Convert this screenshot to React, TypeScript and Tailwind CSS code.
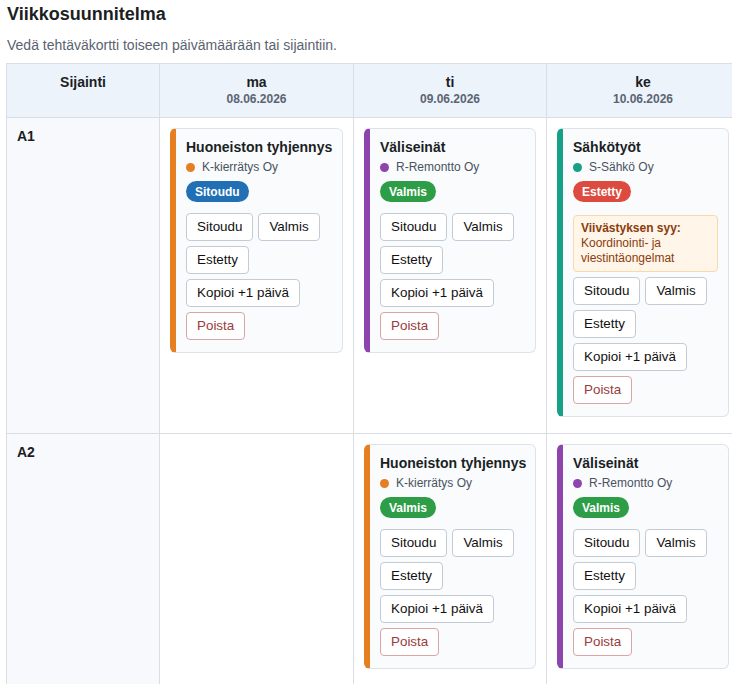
import React from "react";

type Status = "Sitoudu" | "Valmis" | "Estetty";
type Task = {
  title: string;
  company: string;
  color: string;
  status: Status;
  delay?: string;
};

const ORANGE = "#e67e22";
const PURPLE = "#8e44ad";
const TEAL = "#16a085";

const tasks: Record<string, Record<string, Task[]>> = {
  A1: {
    ma: [{ title: "Huoneiston tyhjennys", company: "K-kierrätys Oy", color: ORANGE, status: "Sitoudu" }],
    ti: [{ title: "Väliseinät", company: "R-Remontto Oy", color: PURPLE, status: "Valmis" }],
    ke: [
      {
        title: "Sähkötyöt",
        company: "S-Sähkö Oy",
        color: TEAL,
        status: "Estetty",
        delay: "Koordinointi- ja viestintäongelmat",
      },
    ],
  },
  A2: {
    ma: [],
    ti: [{ title: "Huoneiston tyhjennys", company: "K-kierrätys Oy", color: ORANGE, status: "Valmis" }],
    ke: [{ title: "Väliseinät", company: "R-Remontto Oy", color: PURPLE, status: "Valmis" }],
  },
};

const days = [
  { key: "ma", date: "08.06.2026" },
  { key: "ti", date: "09.06.2026" },
  { key: "ke", date: "10.06.2026" },
];

function Badge({ status }: { status: Status }) {
  const cls =
    status === "Sitoudu"
      ? "bg-[#2170b5]"
      : status === "Valmis"
      ? "bg-[#2e9d47]"
      : "bg-[#dd4b40]";
  return (
    <span
      className={`inline-flex items-center h-[21px] px-[9px] rounded-full text-white text-[12px] font-bold ${cls}`}
    >
      {status}
    </span>
  );
}

function Btn({ children, danger }: { children: React.ReactNode; danger?: boolean }) {
  return (
    <button
      className={
        danger
          ? "h-[28px] px-[10px] rounded-[4px] border border-[#d9a5a5] bg-white text-[13.4px] text-[#9b3b3b]"
          : "h-[28px] px-[10px] rounded-[4px] border border-[#c3cbd4] bg-white text-[13.4px] text-[#111]"
      }
    >
      {children}
    </button>
  );
}

function Card({ task }: { task: Task }) {
  return (
    <div
      className="mb-2 rounded-[6px] border border-[#dfe3e8] border-l-[6px] bg-[#f9fbfd] pl-[10px] pr-[10px] pt-[9px] pb-[12px]"
      style={{ borderLeftColor: task.color }}
    >
      <div className="whitespace-nowrap text-[14px] font-bold leading-[18px] text-[#1b1f24]">{task.title}</div>
      <div className="mt-[4px] flex items-center gap-[7px] text-[12px] leading-[15px] text-[#4a5260]">
        <span className="w-[9px] h-[9px] rounded-full" style={{ backgroundColor: task.color }} />
        {task.company}
      </div>
      <div className="mt-[6px] flex">
        <Badge status={task.status} />
      </div>
      {task.delay && (
        <div className="mt-[13px] rounded-[4px] border border-[#f9d9ab] bg-[#fff5e9] px-[7px] py-[5px] text-[12px] leading-[15px] text-[#8a3c0c]">
          <div className="font-bold">Viivästyksen syy:</div>
          <div>{task.delay}</div>
        </div>
      )}
      <div className={`${task.delay ? "mt-[5px]" : "mt-[11px]"} flex flex-wrap gap-[5px] w-[140px]`}>
        <Btn>Sitoudu</Btn>
        <Btn>Valmis</Btn>
        <Btn>Estetty</Btn>
        <Btn>Kopioi +1 päivä</Btn>
        <Btn danger>Poista</Btn>
      </div>
    </div>
  );
}

export default function App() {
  return (
    <div
      className="h-screen overflow-hidden bg-white pl-[6px] text-[#1b1f24]"
      style={{ fontFamily: '"Liberation Sans", Arial, sans-serif' }}
    >
      <h1 className="pt-[3px] text-[18px] font-bold leading-[22px] pl-[1px]">Viikkosuunnitelma</h1>
      <p className="mt-[12px] pl-[1px] text-[14px] leading-[16px] text-[#5a6370]">
        Vedä tehtäväkortti toiseen päivämäärään tai sijaintiin.
      </p>
      <div className="mt-[10px]">
        <table className="border-collapse table-fixed w-[733px]">
          <colgroup>
            <col className="w-[153px]" />
            <col className="w-[194px]" />
            <col className="w-[193px]" />
            <col className="w-[193px]" />
          </colgroup>
          <thead>
            <tr className="bg-[#edf3fb]">
              <th className="border border-[#d9dee5] px-[10px] pt-[10px] pb-[10px] align-top text-[14px] leading-[17px] font-bold">
                Sijainti
              </th>
              {days.map((d) => (
                <th
                  key={d.key}
                  className="border border-[#d9dee5] px-[10px] pt-[10px] pb-[10px] align-top text-[14px] leading-[17px] font-bold"
                >
                  <div>{d.key}</div>
                  <div className="text-[12px] leading-[16px] text-[#5b6572]">{d.date}</div>
                </th>
              ))}
            </tr>
          </thead>
          <tbody>
            {Object.keys(tasks).map((loc) => (
              <tr key={loc}>
                <td className="border border-[#d9dee5] bg-[#f7f9fc] px-[10px] pt-[10px] align-top text-[14px] font-bold leading-[17px]">
                  {loc}
                </td>
                {days.map((d) => (
                  <td key={d.key} className="border border-[#d9dee5] bg-white px-[10px] pt-[10px] pb-[8px] align-top">
                    {tasks[loc][d.key].map((t, i) => (
                      <Card key={i} task={t} />
                    ))}
                  </td>
                ))}
              </tr>
            ))}
          </tbody>
        </table>
      </div>
    </div>
  );
}
